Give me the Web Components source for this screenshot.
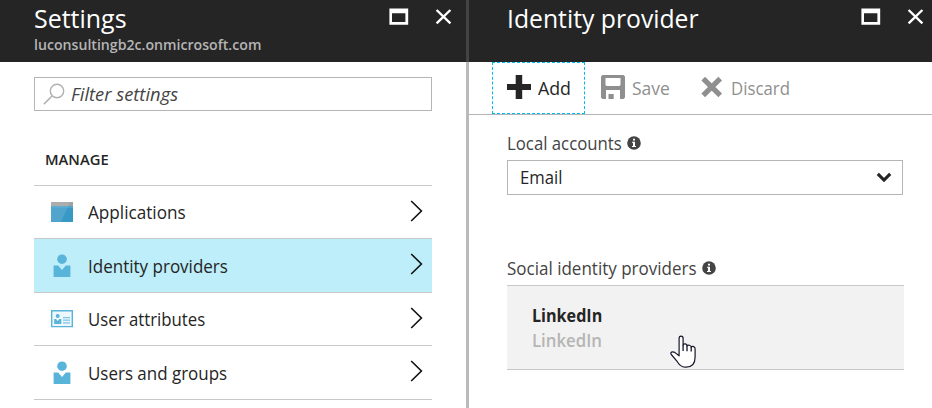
<!DOCTYPE html>
<html lang="en">
<head>
<meta charset="utf-8">
<title>Settings</title>
<style>
html,body{margin:0;height:100%;overflow:hidden;background:#fff}
body{font-family:"Open Sans","Noto Sans",sans-serif;color:#252525}
</style>
</head>
<body>
<portal-app></portal-app>
<script>
const define = (name, html, setup) => {
  const template = document.createElement('template');
  template.innerHTML = html;
  customElements.define(name, class extends HTMLElement {
    constructor() {
      super();
      this.attachShadow({mode: 'open'}).append(template.content.cloneNode(true));
    }
    connectedCallback() { if (setup) setup(this, this.shadowRoot); }
  });
};

const person = '<svg width="18" height="24" viewBox="0 0 18 24"><circle cx="9" cy="5.2" r="4.8" fill="#59b4d9"/><path d="M.6 11.5H5.2L9 16L12.8 11.5H17.4V23H.6Z" fill="#59b4d9"/></svg>';
const icons = {
  app: '<svg width="22" height="20" viewBox="0 0 22 20"><path fill="#3999c6" d="M0 0H22V20H0Z"/><path fill="#a0a1a2" d="M0 0H22V4.3H0Z"/><path fill="#fff" opacity=".12" d="M0 0H19L10 20H0Z"/><path fill="#59b4d9" opacity=".5" d="M0 4.3H22V6H0Z"/></svg>',
  person,
  card: '<svg width="22" height="18" viewBox="0 0 22 18"><path fill="#eef8fc" stroke="#59b4d9" stroke-width="1.4" d="M.7.7H21.3V16.6H.7Z"/><circle cx="6.7" cy="6" r="2" fill="#59b4d9"/><path fill="#59b4d9" d="M3.2 9H5L6.7 11L8.4 9H10.3V14H3.2Z"/><path stroke="#7cc4e1" stroke-width="1.2" d="M12 7.6H19M12 10.2H19M12 12.9H19"/></svg>',
  search: '<svg width="22" height="22" viewBox="0 0 22 22"><circle cx="14" cy="8" r="6.7" fill="none" stroke="#b0b0b0" stroke-width="1.4"/><path d="M9.3 12.8L.9 21.1" stroke="#b0b0b0" stroke-width="1.5"/></svg>',
  max: '<svg width="20" height="18" viewBox="0 0 20 18"><path fill="#fff" fill-rule="evenodd" d="M.4.5H19.2V16.7H.4ZM3 5.2V14H16.4V5.2Z"/></svg>',
  close: '<svg width="18" height="18" viewBox="0 0 18 18"><path d="M1.6 2L15.4 15.3M15.4 2L1.6 15.3" stroke="#fff" stroke-width="2.4"/></svg>',
  next: '<svg width="14" height="22" viewBox="0 0 14 22"><path d="M1.2 1L11.4 11L1.2 21" fill="none" stroke="#111" stroke-width="1.6"/></svg>',
  add: '<svg width="24" height="24" viewBox="0 0 24 24"><path d="M8.7 0H15.2V8.9H24V15.1H15.2V24H8.7V15.1H0V8.9H8.7Z" fill="#252525"/></svg>',
  save: '<svg width="24" height="24" viewBox="0 0 24 24"><path fill-rule="evenodd" fill="#8f8f8f" d="M1.5 0H22.5L24 1.5V22.5L22.5 24H19V15H5V24H1.5L0 22.5V1.5ZM4.5 3V10L5.5 11H18.5L19.5 10V3ZM7.5 19H12.7V24H7.5Z"/></svg>',
  discard: '<svg width="22" height="22" viewBox="0 0 22 22"><path d="M2.2 2.6L19.2 19.4M19.2 2.6L2.2 19.4" stroke="#8f8f8f" stroke-width="5.2"/></svg>',
  info: '<svg width="14" height="14" viewBox="0 0 14 14"><circle cx="7" cy="7" r="6.8" fill="#444"/><path fill="#fff" d="M6 2.8H8V4.5H6ZM5 5.7H8V10H9V11H5V10H6V6.7H5Z"/></svg>',
  down: '<svg width="16" height="11" viewBox="0 0 16 11"><path d="M1.8 1.8L8 8L14.2 1.8" fill="none" stroke="#252525" stroke-width="3.1"/></svg>',
  hand: '<svg width="27" height="34" viewBox="0 0 27 34"><path d="M9.1 20.8V3.5C9.1.4 13.1.4 13.1 3.5V10.2C13.7 8.1 17 8.6 17 11C17.8 9.5 21.2 10 21.2 12.3C22.4 10.7 25.1 11.5 25.1 13.8V22C25.1 29 21.5 32.2 16 32.2C11.7 32.2 9.3 30 7.3 26.7L1.3 19.5C-.3 17.3 2.5 16 5 17.6Z" fill="#fff" stroke="#15162b" stroke-width="1.2" stroke-linejoin="round"/><path d="M13.1 10V16M17 11V16.2M21.2 12.3V16.5" stroke="#15162b" stroke-width="1.3"/></svg>'
};

define('ui-icon', '<style>:host{display:block;flex:none}svg{display:block}</style><span id="i"></span>', (el, root) => {
  root.getElementById('i').innerHTML = icons[el.getAttribute('name')] || '';
});

// A line of text condensed or widened to the width given by its "w" attribute.
define('fit-text', '<style>:host{display:block;flex:none;white-space:nowrap}span{display:inline-block;transform-origin:0 50%}</style><span><slot></slot></span>', (el, root) => {
  const span = root.querySelector('span');
  const w = +el.getAttribute('w');
  span.style.transform = `scaleX(${w / span.offsetWidth})`;
  el.style.width = w + 'px';
});

define('blade-header', `<style>
:host{display:flex;box-sizing:border-box;height:62px;background:#252525;color:#fff;padding:0 13px 0 34px}
.t{flex:1;display:flex;flex-direction:column}
.title{font-size:25.5px;line-height:36px}
::slotted([slot=sub]){font-size:15px;font-weight:600;line-height:17px;color:#b5b5b5}
.b{display:flex;gap:26px;padding-top:8px}
</style><div class="t"><div class="title"><slot></slot></div><slot name="sub"></slot></div>
<div class="b"><ui-icon name="max"></ui-icon><ui-icon name="close"></ui-icon></div>`);

define('search-box', `<style>:host{display:flex;box-sizing:border-box;height:34px;border:1px solid #b5b5b5;padding:5px 8px 0;gap:6px;font-size:17.5px;font-style:italic;line-height:22px;color:#444}</style><ui-icon name="search"></ui-icon><slot></slot>`);

define('menu-item', `<style>
:host{display:flex;box-sizing:border-box;height:53px;border-bottom:1px solid #c8c8c8;padding:0 8px 0 17px;font-size:17.5px;line-height:52px}
:host([tall]){height:54px;line-height:54px}
:host([selected]){background:#bdeefa}
.i{width:22px;display:flex;justify-content:center;align-items:center;margin-right:15px}
.l{flex:1}
.c{padding-top:14px}
</style><div class="i"></div><div class="l"><slot></slot></div><div class="c"><ui-icon name="next"></ui-icon></div>`, (el, root) => {
  root.querySelector('.i').innerHTML = `<ui-icon name="${el.getAttribute('icon')}"></ui-icon>`;
});

define('tool-button', `<style>:host{display:flex;box-sizing:border-box;height:53px;padding:14px 14px 0 14px;gap:7px;border:1px solid transparent;font-size:17.5px;line-height:25px;color:#8f8f8f}
:host([active]){color:#252525}
.r{display:flex}.x{padding-top:1px}</style><div class="r"></div><div class="x"><slot></slot></div>`, (el, root) => {
  root.querySelector('.r').innerHTML = `<ui-icon name="${el.getAttribute('icon')}"></ui-icon>`;
});

define('field-label', `<style>:host{display:flex;gap:5px;align-items:center;height:26px;line-height:26px;font-size:17.5px;color:#444}</style><slot></slot><ui-icon name="info"></ui-icon>`);

define('drop-down', `<style>:host{display:flex;justify-content:space-between;align-items:center;box-sizing:border-box;width:396px;height:35px;border:1px solid #b5b5b5;padding:0 10px 0 11.5px;font-size:17.5px;line-height:33px}</style><slot></slot><ui-icon name="down"></ui-icon>`);

define('provider-card', `<style>:host{display:block;position:relative;box-sizing:border-box;width:397px;height:85px;border:solid #c8c8c8;border-width:1px 0;background:#f2f2f2;padding:17px 24.5px;font-size:17.5px;line-height:25px;font-weight:700}
::slotted([slot=kind]){color:#b5b5b5;font-weight:600}
ui-icon{position:absolute;left:162.5px;top:49px}</style><slot></slot><slot name="kind"></slot><ui-icon name="hand"></ui-icon>`);

define('settings-blade', `<style>
:host{display:block;width:466px}
.body{padding:15px 34px 0}
h2{margin:0;height:75px;box-sizing:border-box;padding:35px 0 0 10.5px;border-bottom:1px solid #c8c8c8;font-size:15px;font-weight:600;line-height:26px}
</style>
<blade-header><fit-text w="93">Settings</fit-text><fit-text slot="sub" w="227">luconsultingb2c.onmicrosoft.com</fit-text></blade-header>
<div class="body"><search-box><fit-text w="107">Filter settings</fit-text></search-box>
<h2><fit-text w="64">MANAGE</fit-text></h2>
<menu-item icon="app"><fit-text w="98">Applications</fit-text></menu-item>
<menu-item tall selected icon="person"><fit-text w="140">Identity providers</fit-text></menu-item>
<menu-item icon="card"><fit-text w="117">User attributes</fit-text></menu-item>
<menu-item tall icon="person"><fit-text w="139.5">Users and groups</fit-text></menu-item></div>`);

define('provider-blade', `<style>
:host{display:block;flex:1}
blade-header{padding:0 7px 0 37.5px}
.bar{display:flex;height:53px;box-sizing:border-box;border-bottom:1px solid #b5b5b5;padding-left:23px}
.add{display:flex;width:93px;height:52px;box-sizing:border-box;border:1px dashed #00bcf2}
.add tool-button{padding:11px 0 0 13px;height:50px}
.save{padding:12px 14px 0 15px}
.dis{padding:13px 0 0 15px;gap:8px}.dis fit-text{margin-top:-1px}
.body{padding:15px 0 0 38px}
.social{margin-top:60px}
provider-card{margin-top:4px}
drop-down{margin-top:4px}
</style>
<blade-header><fit-text w="192">Identity provider</fit-text></blade-header>
<div class="bar"><div class="add"><tool-button active icon="add"><fit-text w="32.5">Add</fit-text></tool-button></div>
<tool-button class="save" icon="save"><fit-text w="38">Save</fit-text></tool-button>
<tool-button class="dis" icon="discard"><fit-text w="58.5">Discard</fit-text></tool-button></div>
<div class="body"><field-label><fit-text w="115">Local accounts</fit-text></field-label>
<drop-down><fit-text w="43">Email</fit-text></drop-down>
<field-label class="social"><fit-text w="189.5">Social identity providers</fit-text></field-label>
<provider-card><fit-text w="70">LinkedIn</fit-text><fit-text slot="kind" w="70">LinkedIn</fit-text></provider-card></div>`);

define('portal-app', `<style>
:host{display:flex;width:932px;height:408px;overflow:hidden;background:#fff}
.d{width:3px;background:linear-gradient(#444 62px,#bababa 62px)}
</style><settings-blade></settings-blade><div class="d"></div><provider-blade></provider-blade>`);
</script>
</body>
</html>
